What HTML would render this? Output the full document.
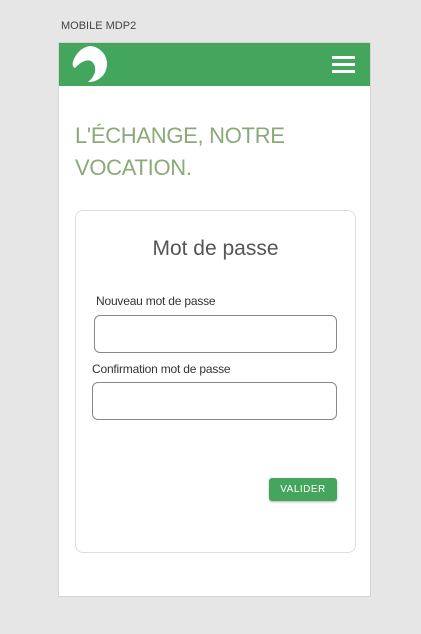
<!DOCTYPE html>
<html><head><meta charset="utf-8"><style>
*{margin:0;padding:0;box-sizing:border-box}
body{width:421px;height:634px;background:#e6e6e6;font-family:"Liberation Sans",sans-serif;position:relative;overflow:hidden}
.abs{position:absolute}
</style></head><body>
<div class="abs" style="left:61px;top:20px;font-size:11px;color:#444">MOBILE MDP2</div>
<div class="abs" style="left:58px;top:42px;width:313px;height:555px;background:#fff;border:1px solid #d4d4d4"></div>
<div class="abs" style="left:59px;top:43px;width:311px;height:43px;background:#44a55c"></div>
<svg class="abs" style="left:71px;top:45px" width="38" height="38" viewBox="0 0 38 38">
<path d="M19 1 A18 18 0 1 1 17 37 C22 33 25 28 24 22 C23 17 19 14 14 16 C10 17 7 20 4 23 C1 22 1 18 3 14 C7 6 12 2 19 1 Z" fill="#fff"/>
</svg>
<div class="abs" style="left:332px;top:56px;width:23px;height:3px;background:#fff"></div>
<div class="abs" style="left:332px;top:63px;width:23px;height:3px;background:#fff"></div>
<div class="abs" style="left:332px;top:70px;width:23px;height:3px;background:#fff"></div>
<div class="abs" style="left:75px;top:120px;font-size:22px;line-height:32px;color:#8aaa78;letter-spacing:-0.3px">L'ÉCHANGE, NOTRE<br>VOCATION.</div>
<div class="abs" style="left:75px;top:210px;width:281px;height:343px;border:1px solid #ddd;border-radius:8px"></div>
<div class="abs" style="left:75px;top:237px;width:281px;text-align:center;font-size:21px;color:#555">Mot de passe</div>
<div class="abs" style="left:96px;top:294px;font-size:12px;color:#333;letter-spacing:-0.2px">Nouveau mot de passe</div>
<div class="abs" style="left:94px;top:315px;width:243px;height:38px;border:1px solid #888;border-radius:6px"></div>
<div class="abs" style="left:92px;top:362px;font-size:12px;color:#333;letter-spacing:-0.2px">Confirmation mot de passe</div>
<div class="abs" style="left:92px;top:382px;width:245px;height:38px;border:1px solid #888;border-radius:6px"></div>
<div class="abs" style="left:269px;top:478px;width:68px;height:23px;background:#44a55c;border-radius:3px;box-shadow:0 1px 2px rgba(0,0,0,.3);color:#fff;font-size:10px;text-align:center;line-height:23px;letter-spacing:.5px">VALIDER</div>
</body></html>
